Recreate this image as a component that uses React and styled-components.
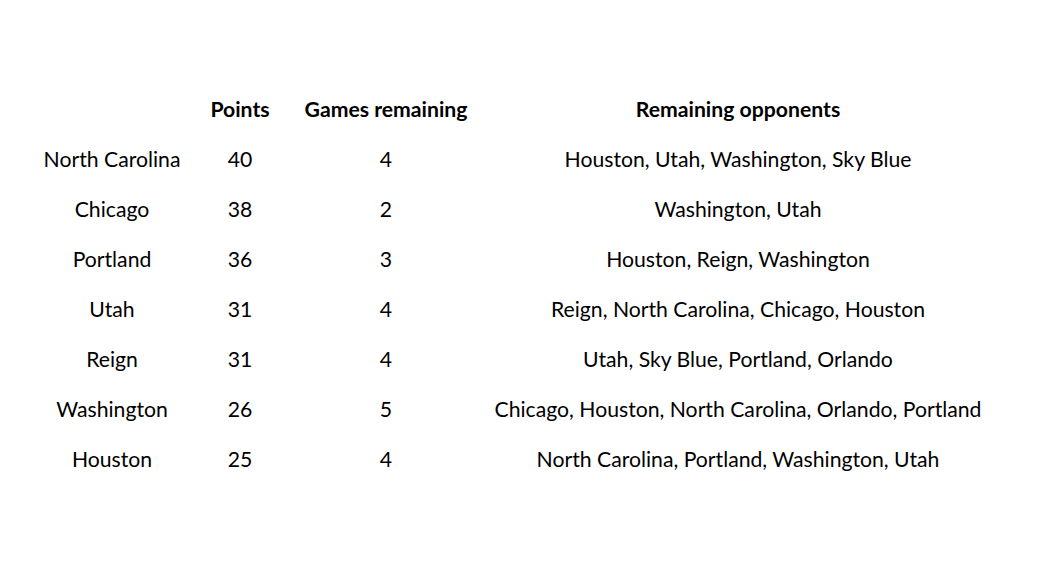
import React from 'react';
import styled, { createGlobalStyle } from 'styled-components';

const rows = [
  ['North Carolina', 40, 4, 'Houston, Utah, Washington, Sky Blue'],
  ['Chicago', 38, 2, 'Washington, Utah'],
  ['Portland', 36, 3, 'Houston, Reign, Washington'],
  ['Utah', 31, 4, 'Reign, North Carolina, Chicago, Houston'],
  ['Reign', 31, 4, 'Utah, Sky Blue, Portland, Orlando'],
  ['Washington', 26, 5, 'Chicago, Houston, North Carolina, Orlando, Portland'],
  ['Houston', 25, 4, 'North Carolina, Portland, Washington, Utah'],
];

export default function App() {
  return (
    <React.Fragment>
      <GlobalStyle />
      <Page>
        <Table>
          <Cell />
          <Head>Points</Head>
          <Head>Games remaining</Head>
          <Head>Remaining opponents</Head>
          {rows.map((r) => (
            <React.Fragment key={r[0]}>
              <Cell>{r[0]}</Cell>
              <Cell>{r[1]}</Cell>
              <Cell>{r[2]}</Cell>
              <Cell>{r[3]}</Cell>
            </React.Fragment>
          ))}
        </Table>
      </Page>
    </React.Fragment>
  );
}

const GlobalStyle = createGlobalStyle`
  body {
    margin: 0;
    background: #fff;
  }
`;

const Page = styled.div`
  width: 1041px;
  height: 585px;
  padding: 84px 0 0 30px;
  box-sizing: border-box;
  font-family: Lato, 'Liberation Sans', sans-serif;
  font-size: 21.2px;
  color: #000;
`;

const Table = styled.div`
  display: grid;
  grid-template-columns: 164px 92px 200px 504px;
  grid-auto-rows: 50px;
`;

const Cell = styled.div`
  display: flex;
  align-items: center;
  justify-content: center;
  white-space: nowrap;
`;

const Head = styled(Cell)`
  font-weight: 700;
`;
